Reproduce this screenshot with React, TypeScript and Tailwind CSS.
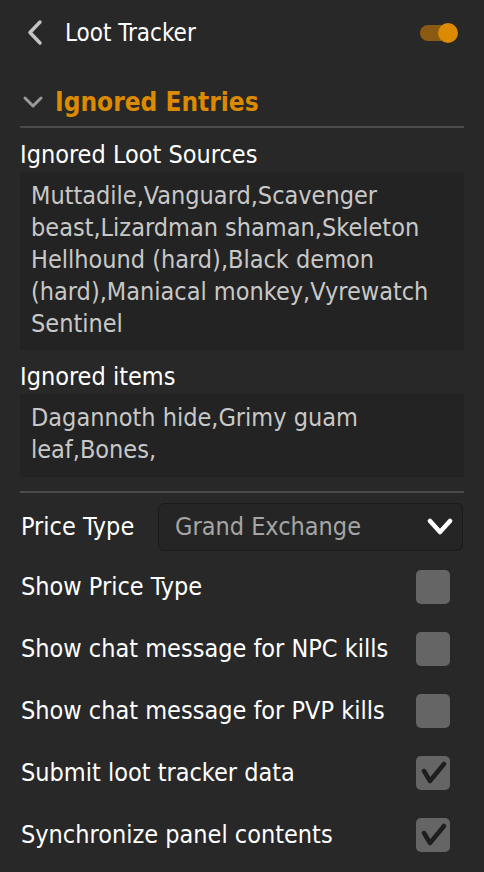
import React from 'react';

const font = "font-[family-name:'DejaVu_Sans_Condensed','DejaVu_Sans',sans-serif]";

const sources = [
  'Muttadile,Vanguard,Scavenger',
  'beast,Lizardman shaman,Skeleton',
  'Hellhound (hard),Black demon',
  '(hard),Maniacal monkey,Vyrewatch',
  'Sentinel',
];

const items = ['Dagannoth hide,Grimy guam', 'leaf,Bones,'];

const toggles = [
  { label: 'Show Price Type', checked: false },
  { label: 'Show chat message for NPC kills', checked: false },
  { label: 'Show chat message for PVP kills', checked: false },
  { label: 'Submit loot tracker data', checked: true },
  { label: 'Synchronize panel contents', checked: true },
];

const Checkbox = ({ checked }: { checked: boolean }) => (
  <div className="w-[34px] h-[34px] rounded-[5px] bg-[#656565] mr-[14px] shrink-0">
    {checked && (
      <svg width="34" height="34" viewBox="0 0 34 34">
        <path d="M8 15 L14 25 L28 8" fill="none" stroke="#1e1e1e" strokeWidth="4.5" strokeLinecap="round" strokeLinejoin="round" />
      </svg>
    )}
  </div>
);

const TextBox = ({ lines, pb }: { lines: string[]; pb: string }) => (
  <div className={`mt-[3px] bg-[#232323] pl-[11px] pt-[8px] ${pb} text-[#c8c8c8] text-[25px] leading-[32px]`}>
    {lines.map((l) => (
      <div key={l} className="whitespace-pre">{l}</div>
    ))}
  </div>
);

export default function App() {
  return (
    <div className={`${font} bg-[#282828] min-h-screen w-full px-[20px] text-white`}>
      {/* header */}
      <div className="h-[66px] flex items-center justify-between">
        <div className="flex items-center">
          <svg width="24" height="28" viewBox="0 0 24 28" className="ml-[6px]">
            <path d="M14 3 L4 13.5 L14 24" fill="none" stroke="#c4c4c4" strokeWidth="3.5" strokeLinecap="round" strokeLinejoin="round" />
          </svg>
          <span className="ml-[15px] text-[24px] leading-[32px]">Loot Tracker</span>
        </div>
        <div className="relative w-[38px] h-[20px] mr-[6px]">
          <div className="absolute left-0 top-[2px] w-[32px] h-[16px] rounded-full bg-[#8a5a12]" />
          <div className="absolute right-0 top-0 w-[20px] h-[20px] rounded-full bg-[#dc8a00]" />
        </div>
      </div>

      {/* section header */}
      <div className="mt-[20px] pb-[8px] flex items-center">
        <svg width="22" height="14" viewBox="0 0 22 14" className="ml-[2px]">
          <path d="M3 3 L11 11 L19 3" fill="none" stroke="#9a9a9a" strokeWidth="3" strokeLinecap="round" strokeLinejoin="round" />
        </svg>
        <span className="ml-[11px] text-[26px] leading-[32px] font-bold text-[#dc8a00]">Ignored Entries</span>
      </div>
      <div className="h-[2px] bg-[#4b4b4b]" />

      <div className="mt-[13px] text-[25px] leading-[28px]">Ignored Loot Sources</div>
      <TextBox lines={sources} pb="pb-[10px]" />

      <div className="mt-[13px] text-[25px] leading-[28px]">Ignored items</div>
      <TextBox lines={items} pb="pb-[11px]" />

      <div className="mt-[14px] h-[2px] bg-[#4b4b4b]" />

      {/* price type */}
      <div className="mt-[10px] flex items-center">
        <div className="w-[138px] pl-[1px] text-[25px] leading-[32px]">Price Type</div>
        <div className="flex-1 h-[48px] mr-[1px] rounded-[6px] border border-[#1a1a1a] bg-[#252525] flex items-center justify-between pl-[16px] pr-[9px]">
          <span className="text-[25px] leading-[32px] text-[#a5a5a5]">Grand Exchange</span>
          <svg width="26" height="20" viewBox="0 0 26 20">
            <path d="M3 4 L13 15 L23 4" fill="none" stroke="#ffffff" strokeWidth="4.5" strokeLinecap="round" strokeLinejoin="round" />
          </svg>
        </div>
      </div>

      {/* checkbox rows */}
      <div className="mt-[5px]">
        {toggles.map((t) => (
          <div key={t.label} className="h-[62px] flex items-center justify-between">
            <span className="pl-[1px] text-[25px] leading-[32px]">{t.label}</span>
            <Checkbox checked={t.checked} />
          </div>
        ))}
      </div>
    </div>
  );
}
